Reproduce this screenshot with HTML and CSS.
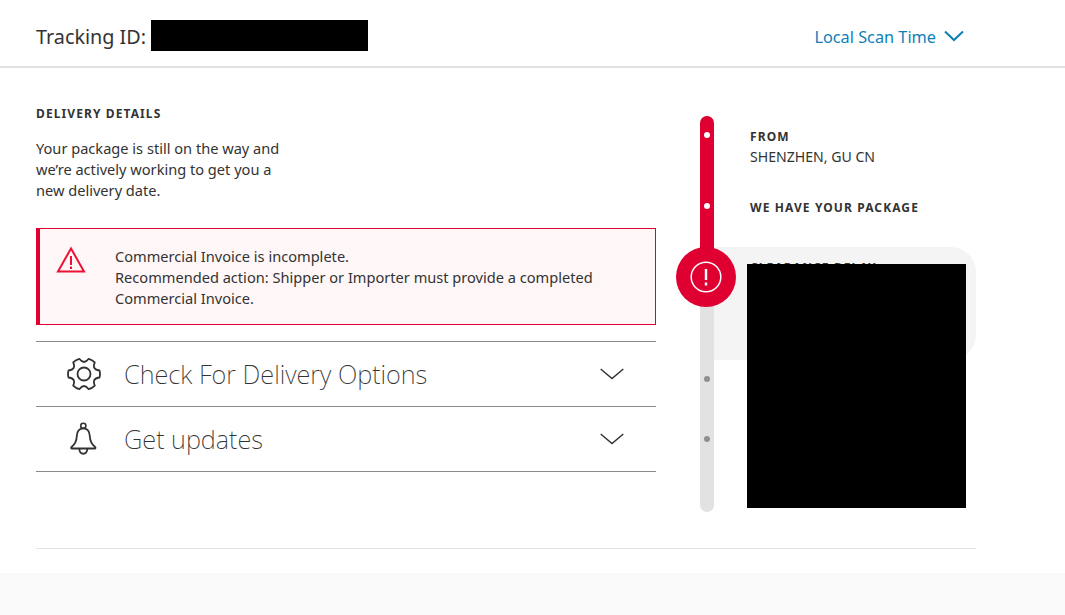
FILE: index.html
```html
<!DOCTYPE html>
<html lang="en">
<head>
<meta charset="utf-8">
<title>Tracking</title>
<link rel="stylesheet" href="styles.css">
</head>
<body>
<header class="top">
  <div class="tracking"><span class="tracking-label">Tracking ID:</span><span class="redact-id"></span></div>
  <a class="scan-time">Local Scan Time
    <svg class="scan-chev" width="20" height="12" viewBox="0 0 20 12"><path d="M1 1.5 10 10 19 1.5" fill="none" stroke="#0f7fb8" stroke-width="2"/></svg>
  </a>
</header>
<main class="content">
  <section class="left">
    <h2 class="eyebrow">DELIVERY DETAILS</h2>
    <p class="lead">Your package is still on the way and we’re actively working to get you a new delivery date.</p>
    <div class="alert">
      <svg class="alert-icon" width="30" height="28" viewBox="0 0 30 28"><path d="M15 2.5 28 25.5H2Z" fill="none" stroke="#ee1133" stroke-width="2"/><path d="M15 10v9M15 20.5v2.5" fill="none" stroke="#ee1133" stroke-width="2"/></svg>
      <p class="alert-text">Commercial Invoice is incomplete.<br>Recommended action: Shipper or Importer must provide a completed Commercial Invoice.</p>
    </div>
    <div class="acc">
      <div class="acc-row">
        <svg class="acc-icon" width="34" height="34" viewBox="0 0 34 34"><path d="M21.72 1.83Q25.25 2.71 27.78 5.33Q24.65 12.59 32.5 13.5Q33.5 17 32.5 20.5Q24.65 21.41 27.78 28.67Q25.25 31.29 21.72 32.17Q17 25.83 12.28 32.17Q8.75 31.29 6.22 28.67Q9.35 21.41 1.5 20.5Q.5 17 1.5 13.5Q9.35 12.59 6.22 5.33Q8.75 2.71 12.28 1.83Q17 8.17 21.72 1.83Z" fill="none" stroke="#333" stroke-width="1.8" stroke-linejoin="round"/><circle cx="17" cy="17" r="6.5" fill="none" stroke="#333" stroke-width="1.8"/></svg>
        <span class="acc-title">Check For Delivery Options</span>
        <svg class="acc-chev" width="24" height="12" viewBox="0 0 24 12"><path d="M.7 1 12 10.5 23.3 1" fill="none" stroke="#333" stroke-width="1.5"/></svg>
      </div>
      <div class="acc-row">
        <svg class="acc-icon" width="34" height="34" viewBox="0 0 34 34"><path d="M16.3 6.3C11 6.3 10 10 9.8 14C9.6 19 8.5 22 4.5 25C3.8 25.6 4 26.5 5 26.5H27.6C28.6 26.5 28.8 25.6 28.1 25C24.1 22 23 19 22.8 14C22.6 10 21.6 6.3 16.3 6.3Z" fill="none" stroke="#333" stroke-width="1.8"/><circle cx="16.3" cy="3.8" r="2.6" fill="none" stroke="#333" stroke-width="1.6"/><path d="M12.3 26.5C12.5 33.5 20.1 33.5 20.3 26.5" fill="none" stroke="#333" stroke-width="1.8"/></svg>
        <span class="acc-title">Get updates</span>
        <svg class="acc-chev" width="24" height="12" viewBox="0 0 24 12"><path d="M.7 1 12 10.5 23.3 1" fill="none" stroke="#333" stroke-width="1.5"/></svg>
      </div>
    </div>
  </section>
  <section class="right">
    <div class="rail">
      <div class="rail-done"></div>
      <span class="dot dot-a"></span>
      <span class="dot dot-b"></span>
      <span class="dot dot-c"></span>
      <span class="dot dot-d"></span>
      <div class="rail-badge">
        <svg width="32" height="32" viewBox="0 0 32 32"><circle cx="16" cy="16" r="14.8" fill="none" stroke="#fff" stroke-width="1.5"/><path d="M16 8v11M16 21.5v3" fill="none" stroke="#fff" stroke-width="2.4"/></svg>
      </div>
    </div>
    <div class="step step-from">
      <h3 class="step-title">FROM</h3>
      <p class="step-text">SHENZHEN, GU CN</p>
    </div>
    <div class="step step-have">
      <h3 class="step-title">WE HAVE YOUR PACKAGE</h3>
    </div>
    <div class="card">
      <h3 class="step-title">CLEARANCE DELAY</h3>
    </div>
    <div class="redact-panel"></div>
  </section>
</main>
<div class="rule"></div>
<footer class="foot"></footer>
</body>
</html>
```
FILE: styles.css
```css
* { box-sizing: border-box; }
html, body { margin: 0; padding: 0; }
body {
  width: 1065px;
  height: 615px;
  overflow: hidden;
  background: #fff;
  color: #333;
  font-family: "Noto Sans", "Liberation Sans", sans-serif;
  display: flex;
  flex-direction: column;
}
h2, h3, p { margin: 0; }

.top {
  height: 68px;
  flex: none;
  border-bottom: 2px solid #e2e2e2;
  padding: 4px 101px 0 36px;
  display: flex;
  align-items: center;
  justify-content: space-between;
}
.tracking { display: flex; align-items: center; gap: 5px; }
.tracking-label { font-size: 19.8px; line-height: 31px; padding-top: 3px; color: #333; }
.redact-id { display: block; width: 217px; height: 31px; background: #000; }
.scan-time {
  display: flex;
  align-items: center;
  gap: 8px;
  padding-top: 4px;
  font-size: 16.3px;
  color: #0f7fb8;
}
.scan-chev { margin-top: -2px; }

.content {
  height: 480px;
  flex: none;
  padding: 0 89px 0 36px;
  display: flex;
  justify-content: space-between;
}
.left { width: 620px; padding-top: 39px; }
.eyebrow {
  font-size: 12px;
  line-height: 14px;
  font-weight: 700;
  letter-spacing: 1.1px;
  color: #333;
}
.lead {
  width: 250px;
  margin-top: 17px;
  font-size: 14.6px;
  line-height: 21px;
}
.alert {
  height: 97px;
  margin-top: 27px;
  border: 1px solid #df0031;
  border-left-width: 4px;
  background: #fff7f7;
  display: flex;
  padding: 17px 40px 0 16px;
  gap: 29px;
}
.alert-icon { flex: none; }
.alert-text { font-size: 14.6px; line-height: 21px; }

.acc { margin-top: 16px; border-top: 1px solid #8a8a8a; }
.acc-row {
  height: 65px;
  border-bottom: 1px solid #8a8a8a;
  display: flex;
  align-items: center;
  padding: 0 32px 0 31px;
}
.acc-icon { flex: none; }
.acc-title {
  flex: 1;
  margin-left: 23px;
  font-size: 25.4px;
  font-weight: 200;
  color: #333;
}
.acc-chev { flex: none; }

.right { width: 256px; position: relative; }
.rail {
  position: absolute;
  left: -20px;
  top: 48px;
  width: 14px;
  height: 396px;
  border-radius: 7px;
  background: #e2e2e2;
}
.rail-done {
  width: 14px;
  height: 150px;
  border-radius: 7px 7px 0 0;
  background: #df0031;
}
.dot {
  position: absolute;
  left: 4px;
  width: 6px;
  height: 6px;
  border-radius: 50%;
}
.dot-a { top: 16px; background: #fff; }
.dot-b { top: 87px; background: #fff; }
.dot-c { top: 260px; background: #8f8f8f; }
.dot-d { top: 320px; background: #8f8f8f; }
.rail-badge {
  position: absolute;
  left: -24px;
  top: 131px;
  width: 60px;
  height: 60px;
  border-radius: 50%;
  background: #df0031;
  display: flex;
  align-items: center;
  justify-content: center;
}

.step { padding-left: 30px; }
.step-title {
  font-size: 12px;
  line-height: 14px;
  font-weight: 700;
  letter-spacing: 1.1px;
  color: #333;
}
.step-text { font-size: 14.1px; line-height: 21px; margin-top: 2px; }
.step-from { padding-top: 62px; }
.step-have { padding-top: 34px; }
.card {
  margin-top: 32px;
  margin-left: -6px;
  height: 113px;
  padding: 14px 0 0 36px;
  background: #f4f4f4;
  border-radius: 0 25px 25px 0;
}
.redact-panel {
  position: absolute;
  left: 27px;
  top: 196px;
  width: 219px;
  height: 244px;
  background: #000;
}

.rule {
  flex: none;
  height: 1px;
  margin: 0 89px 0 36px;
  background: #e2e2e2;
}
.foot { flex: 1; margin-top: 24px; background: #f9f9f9; }
```
